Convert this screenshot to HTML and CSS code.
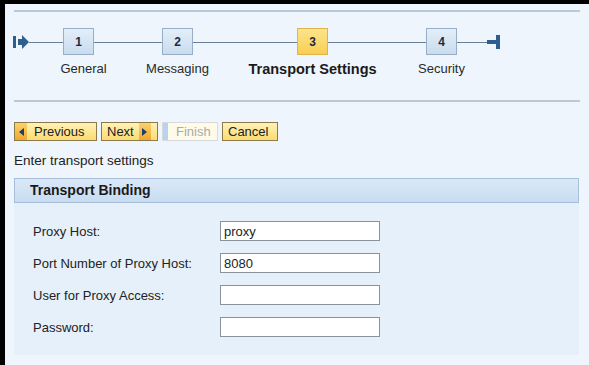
FILE: index.html
```html
<!DOCTYPE html>
<html>
<head>
<meta charset="utf-8">
<link rel="stylesheet" href="styles.css">
</head>
<body>
<div class="frame">
  <div class="rule top"></div>
  <div class="roadmap">
    <svg class="cap start" width="16" height="14" viewBox="0 0 16 14"><rect x="0" y="1" width="3" height="12" fill="#2f5f8f"/><path d="M5 4h4V0l7 7-7 7v-4H5z" fill="#2f5f8f"/></svg>
    <span class="seg" style="width:34px"></span>
    <div class="step"><div class="box">1</div><div class="lbl first">General</div></div>
    <span class="seg" style="width:68px"></span>
    <div class="step"><div class="box">2</div><div class="lbl">Messaging</div></div>
    <span class="seg" style="width:104px"></span>
    <div class="step active"><div class="box">3</div><div class="lbl">Transport Settings</div></div>
    <span class="seg" style="width:98px"></span>
    <div class="step"><div class="box">4</div><div class="lbl">Security</div></div>
    <span class="seg" style="width:30px"></span>
    <svg class="cap end" width="14" height="14" viewBox="0 0 14 14"><rect x="0" y="5" width="9" height="4" fill="#2f5f8f"/><rect x="9" y="0" width="4" height="14" fill="#2f5f8f"/></svg>
  </div>
  <div class="rule bottom"></div>
  <div class="buttons">
    <button class="btn prev"><span class="arr"><svg width="5" height="8" viewBox="0 0 5 8"><path d="M5 0v8L0 4z" fill="#1d3f6e"/></svg></span>Previous</button>
    <button class="btn next">Next<span class="arr right"><svg width="5" height="8" viewBox="0 0 5 8"><path d="M0 0v8l5-4z" fill="#1d3f6e"/></svg></span></button>
    <button class="btn disabled">Finish</button>
    <button class="btn cancel">Cancel</button>
  </div>
  <div class="hint">Enter transport settings</div>
  <div class="group">
    <div class="ghead">Transport Binding</div>
    <div class="gbody">
      <div class="row"><label>Proxy Host:</label><input type="text" value="proxy"></div>
      <div class="row"><label>Port Number of Proxy Host:</label><input type="text" value="8080"></div>
      <div class="row"><label>User for Proxy Access:</label><input type="text" value=""></div>
      <div class="row"><label>Password:</label><input type="password" value=""></div>
    </div>
  </div>
</div>
</body>
</html>
```

FILE: styles.css
```css
html, body {
  margin: 0;
  padding: 0;
  background: #000;
  width: 589px;
  height: 365px;
  overflow: hidden;
}
.frame {
  display: flow-root;
  margin: 4px 0 0 5px;
  height: 361px;
  background: #eef5fc;
  font-family: "Liberation Sans", Arial, sans-serif;
  font-size: 13px;
  color: #222;
  padding: 0 10px 0 9px;
  box-sizing: border-box;
}
.rule {
  height: 2px;
  background: #bcc8d4;
  margin-right: -1px;
}
.rule.top { margin-top: 6px; }
.roadmap {
  display: flex;
  align-items: flex-start;
  height: 88px;
  padding-top: 16px;
  box-sizing: border-box;
}
.cap { margin-top: 7px; flex: none; }
.cap.start { margin-left: -1px; }
.seg {
  flex: none;
  height: 1px;
  background: #6a7f94;
  margin-top: 14px;
}
.step {
  display: flex;
  flex-direction: column;
  align-items: center;
  width: 31px;
  flex: none;
}
.box {
  width: 31px;
  height: 27px;
  box-sizing: border-box;
  border: 1px solid #97aec6;
  background: linear-gradient(#e3eef9, #c9dcef);
  display: flex;
  align-items: center;
  justify-content: center;
  font-weight: bold;
  font-size: 12px;
  color: #1b2b3b;
}
.lbl {
  white-space: nowrap;
  margin-top: 6px;
  font-size: 13px;
  line-height: 16px;
  color: #2a2a2a;
}
.lbl.first { margin-left: 10px; }
.step.active .box {
  background: linear-gradient(#fde48a, #f8cf55);
  border-color: #e0b448;
}
.step.active .lbl {
  font-weight: bold;
  font-size: 14.5px;
  color: #1a1a1a;
}
.buttons {
  display: flex;
  gap: 4px;
  margin-top: 20px;
}
.btn {
  height: 19px;
  box-sizing: border-box;
  border: 1px solid #8c7a4a;
  background: linear-gradient(#fff2b8, #fbdc72);
  font-family: "Liberation Sans", Arial, sans-serif;
  font-size: 13px;
  color: #222;
  padding: 0 5px;
  display: flex;
  align-items: center;
  gap: 5px;
  margin: 0;
}
.btn .arr {
  display: flex;
  align-items: center;
  justify-content: center;
  width: 12px;
  align-self: stretch;
  background: linear-gradient(#fbd36a, #f0a830);
  margin-left: -5px;
}
.btn .arr.right { margin-left: 0; margin-right: -5px; }
.btn.prev { width: 83px; gap: 7px; }
.btn.next { width: 57px; }
.btn.disabled {
  width: 56px;
  color: #a9a9a9;
  border-color: #d6dbe0;
  background: linear-gradient(90deg, #b9d2ee 0, #b9d2ee 5px, #fffbe8 5px);
  padding-left: 13px;
}
.btn.cancel { width: 56px; }
.hint {
  margin-top: 11px;
  height: 17px;
  line-height: 17px;
  font-size: 13.5px;
}
.group { margin-top: 9px; }
.ghead {
  height: 25px;
  box-sizing: border-box;
  border: 1px solid #a8bfdc;
  background: linear-gradient(#dae9f8, #c8dcf1);
  font-weight: bold;
  font-size: 14px;
  padding-left: 15px;
  line-height: 22px;
  color: #1a1a1a;
}
.gbody {
  background: #e6f0fa;
  height: 152px;
  padding-top: 18px;
  box-sizing: border-box;
  padding-left: 19px;
}
.row {
  display: flex;
  align-items: center;
  height: 20px;
  margin-bottom: 12px;
}
.row label {
  width: 187px;
  flex: none;
  color: #222;
}
.row input {
  width: 160px;
  height: 20px;
  box-sizing: border-box;
  border: 1px solid #8a939c;
  background: #fff;
  font-family: "Liberation Sans", Arial, sans-serif;
  font-size: 13px;
  padding: 0 3px;
  margin: 0;
  color: #222;
}
```
